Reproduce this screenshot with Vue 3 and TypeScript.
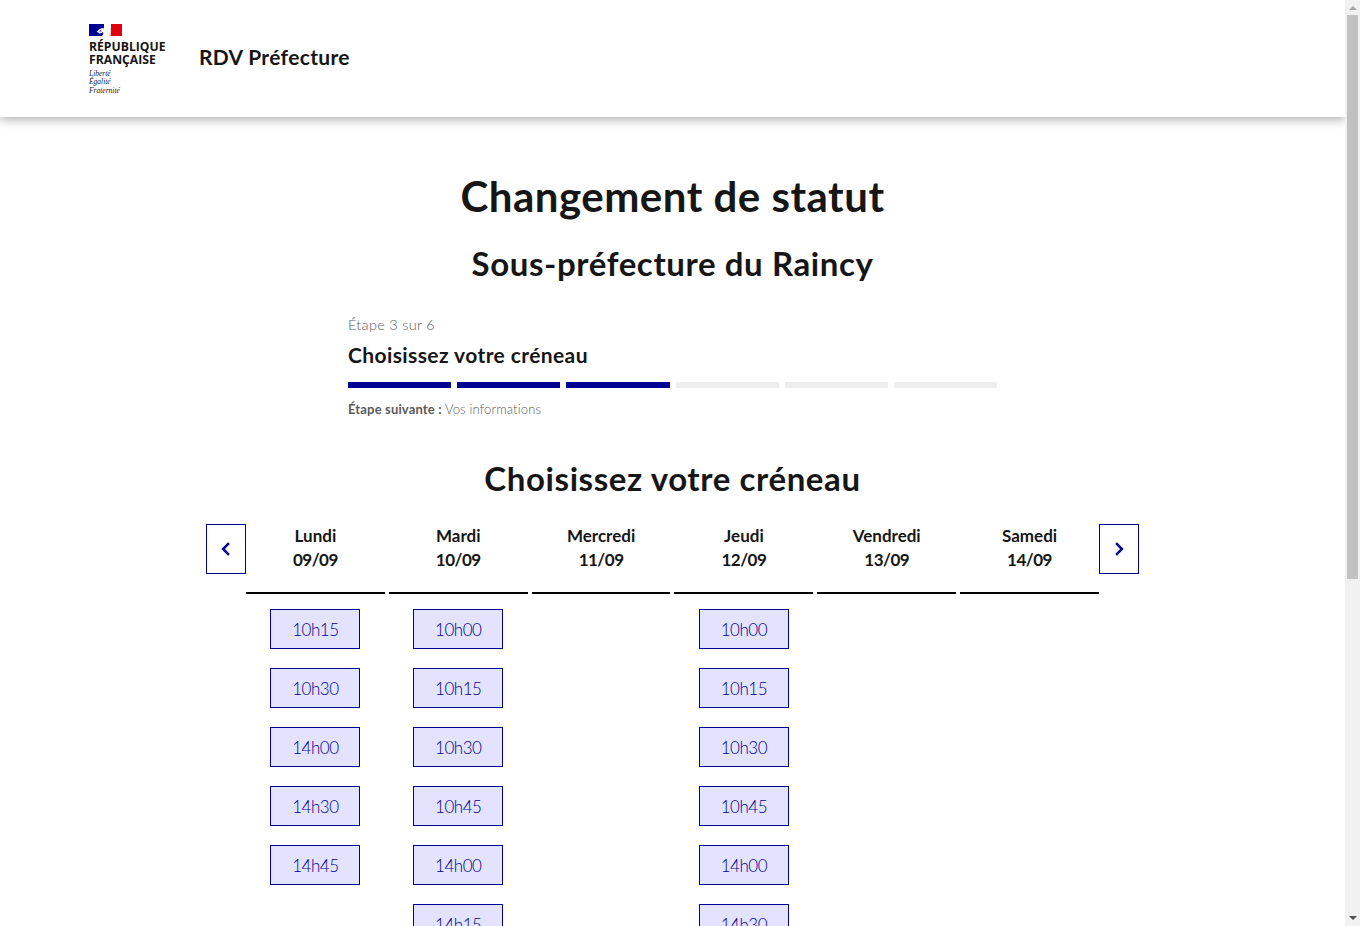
<script setup lang="ts">
interface Day { name: string; date: string; slots: string[] }
const steps = [true, true, true, false, false, false]
const days: Day[] = [
  { name: 'Lundi', date: '09/09', slots: ['10h15', '10h30', '14h00', '14h30', '14h45'] },
  { name: 'Mardi', date: '10/09', slots: ['10h00', '10h15', '10h30', '10h45', '14h00', '14h15', '14h30', '14h45'] },
  { name: 'Mercredi', date: '11/09', slots: [] },
  { name: 'Jeudi', date: '12/09', slots: ['10h00', '10h15', '10h30', '10h45', '14h00', '14h30', '14h45'] },
  { name: 'Vendredi', date: '13/09', slots: [] },
  { name: 'Samedi', date: '14/09', slots: [] },
]
</script>

<template>
  <div class="page">
    <header class="header">
      <div class="brand">
        <div class="logo">
          <svg class="flag" viewBox="0 0 33 12" width="33" height="12" aria-hidden="true">
            <rect width="33" height="12" fill="#fff" />
            <rect width="15" height="12" fill="#000091" />
            <rect x="22" width="11" height="12" fill="#e1000f" />
            <path d="M15 4.2l-2.6.1-2.4 1.3L7.6 8l1.8.6.9.9 2.3-.6 1-.9.9 1.2L13.2 12H15z" fill="#fff" />
            <path d="M9.6 7.2l1.7-1.2 1.6.1-.9 1 1 .4-1.5.8z" fill="#7c7cc4" />
            <path d="M22 3.6l-.8 1.6.9 1.5-1 1.1.6 1.8-1.7.7.3 1.7H22z" fill="#f4b6ba" />
          </svg>
          <div class="rf">RÉPUBLIQUE<br />FRANÇAISE</div>
          <div class="motto">Liberté<br />Égalité<br />Fraternité</div>
        </div>
        <div class="service">RDV Préfecture</div>
      </div>
    </header>

    <main class="main">
      <h1 class="title">Changement de statut</h1>
      <h2 class="subtitle">Sous-préfecture du Raincy</h2>

      <section class="stepper">
        <div class="step-count">Étape 3 sur 6</div>
        <div class="step-title">Choisissez votre créneau</div>
        <div class="bars">
          <span v-for="(on, i) in steps" :key="i" class="bar" :class="{ on }"></span>
        </div>
        <div class="step-next"><b>Étape suivante :</b> Vos informations</div>
      </section>

      <h2 class="pick">Choisissez votre créneau</h2>

      <section class="calendar">
        <button class="nav" type="button" aria-label="Précédent">
          <svg viewBox="0 0 24 24" width="20" height="20"><path d="M15.5 5l-7 7 7 7" fill="none" stroke="#000091" stroke-width="3" /></svg>
        </button>
        <div class="days">
          <div v-for="d in days" :key="d.name" class="day">
            <div class="day-head">
              <div>{{ d.name }}</div>
              <div class="date">{{ d.date }}</div>
            </div>
            <div class="slots">
              <button v-for="s in d.slots" :key="s" class="slot" type="button">{{ s }}</button>
            </div>
          </div>
        </div>
        <button class="nav" type="button" aria-label="Suivant">
          <svg viewBox="0 0 24 24" width="20" height="20"><path d="M8.5 5l7 7-7 7" fill="none" stroke="#000091" stroke-width="3" /></svg>
        </button>
      </section>
    </main>

    <div class="scrollbar" aria-hidden="true">
      <span class="arrow up"></span>
      <span class="thumb"></span>
      <span class="arrow down"></span>
    </div>
  </div>
</template>

<style>
html, body { margin: 0; background: #fff; }
</style>

<style scoped>
.page {
  width: 1345px;
  min-height: 1471px;
  background: #fff;
  color: #161616;
  font-family: Lato, "Noto Sans", sans-serif;
}
.header {
  height: 117px;
  box-shadow: 0 2px 10px rgba(0, 0, 0, 0.35);
  padding-left: 89px;
  box-sizing: border-box;
}
.brand { display: flex; align-items: center; height: 100%; gap: 32px; }
.logo { width: 78px; padding-top: 2px; }
.flag { display: block; margin-bottom: 4px; }
.rf {
  font-family: "Open Sans", sans-serif;
  font-size: 12.2px;
  line-height: 13px;
  font-weight: 700;
}
.motto {
  font-family: "Liberation Serif", serif;
  font-style: italic;
  font-size: 7.5px;
  line-height: 8.5px;
  margin-top: 4px;
  color: #222;
}
.service { font-size: 21px; font-weight: 700; letter-spacing: 0.33px; margin-bottom: 5px; }
.main { display: flex; flex-direction: column; align-items: center; padding-top: 53px; }
.title { margin: 0; font-size: 42px; line-height: 52px; font-weight: 700; letter-spacing: 0.5px; }
.subtitle { margin: 21px 0 0; font-size: 33px; line-height: 40px; font-weight: 700; letter-spacing: 0.6px; }
.stepper { width: 649px; margin-top: 32px; }
.step-count { font-size: 14.5px; line-height: 20px; font-weight: 300; color: #5a5a5a; letter-spacing: 0.3px; }
.step-title { margin-top: 7px; font-size: 21px; line-height: 26px; font-weight: 700; letter-spacing: 0.4px; }
.bars { display: flex; gap: 6px; margin-top: 14px; }
.bar { flex: 1; height: 6px; background: #eee; }
.bar.on { background: #000091; }
.step-next { margin-top: 12px; font-size: 13px; line-height: 18px; font-weight: 300; color: #5a5a5a; letter-spacing: 0.15px; }
.step-next b { font-weight: 700; }
.pick { margin: 40px 0 0; font-size: 33px; line-height: 40px; font-weight: 700; letter-spacing: 0.6px; }
.calendar { display: flex; align-items: flex-start; width: 933px; margin-top: 26px; }
.nav {
  width: 40px;
  height: 50px;
  flex: none;
  padding: 0;
  display: flex;
  align-items: center;
  justify-content: center;
  background: #fff;
  border: 1px solid #000091;
}
.days { flex: 1; display: flex; gap: 4px; min-width: 0; }
.day { flex: 1; min-width: 0; }
.day-head {
  height: 68px;
  border-bottom: 2px solid #000;
  text-align: center;
  font-size: 17px;
  line-height: 24px;
  font-weight: 700;
}
.date { letter-spacing: -0.5px; }
.slots { display: flex; flex-direction: column; align-items: center; gap: 19px; padding-top: 15px; }
.slot {
  width: 90px;
  height: 40px;
  padding: 0;
  background: #e3e3fd;
  border: 1px solid #000091;
  color: #000091;
  font-family: inherit;
  font-size: 17px;
  letter-spacing: -0.5px;
  font-weight: 300;
}
.scrollbar {
  position: fixed;
  top: 0;
  right: 0;
  bottom: 0;
  width: 15px;
  background: #f1f1f1;
}
.thumb {
  position: absolute;
  top: 15px;
  left: 2px;
  width: 11px;
  height: 564px;
  background: #c1c1c1;
}
.arrow {
  position: absolute;
  left: 4px;
  width: 0;
  height: 0;
  border-left: 4px solid transparent;
  border-right: 4px solid transparent;
}
.arrow.up { top: 6px; border-bottom: 4px solid #a3a3a3; }
.arrow.down { bottom: 6px; border-top: 4px solid #505050; }
</style>
